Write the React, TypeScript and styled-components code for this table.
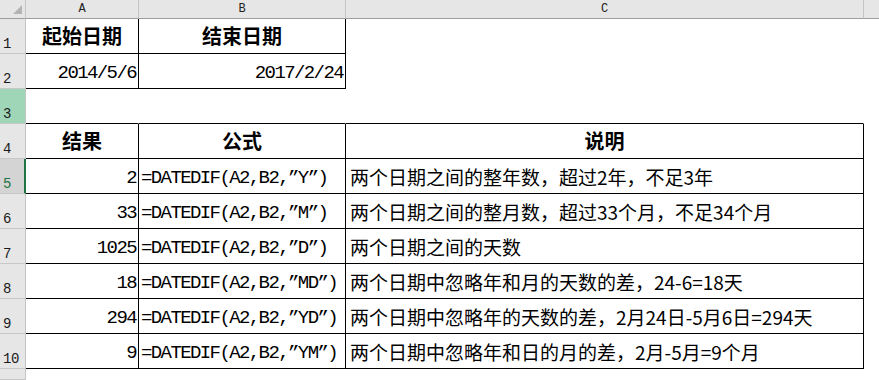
import React from 'react';
import styled, { createGlobalStyle, css } from 'styled-components';

const GlobalStyle = createGlobalStyle`
  html, body {
    margin: 0;
    padding: 0;
    background: #ffffff;
  }
`;

const Sheet = styled.div`
  display: grid;
  grid-template-columns: 26px 113px 207px 518px 1fr;
  grid-template-rows: 19px repeat(10, 35px) 1fr;
  width: 879px;
  height: 380px;
  overflow: hidden;
  background: #ffffff;
  color: #000000;
`;

const Corner = styled.div`
  display: flex;
  align-items: flex-end;
  justify-content: flex-end;
  padding: 0 3px 4px 0;
  background: #e6e6e6;
  border-right: 1px solid #c4c4c4;
  border-bottom: 1px solid #9e9e9e;
`;

const ColHead = styled.div<{ $last?: boolean }>`
  display: flex;
  align-items: center;
  justify-content: center;
  background: #e6e6e6;
  border-right: ${({ $last }) => ($last ? 'none' : '1px solid #c4c4c4')};
  border-bottom: 1px solid #9e9e9e;
  font-family: 'Liberation Mono', 'DejaVu Sans Mono', monospace;
  font-size: 12px;
  line-height: 18px;
  color: #222222;
`;

type RowState = 'normal' | 'picked' | 'active';

const RowHead = styled.div<{ $state: RowState }>`
  display: flex;
  align-items: flex-end;
  padding: 0 0 1px 3px;
  background: #e6e6e6;
  border-right: 1px solid #c4c4c4;
  border-bottom: 1px solid #c8c8c8;
  font-family: 'Liberation Mono', 'DejaVu Sans Mono', monospace;
  font-size: 14px;
  letter-spacing: -0.5px;
  line-height: 15px;
  color: #1a1a1a;

  ${({ $state }) =>
    $state === 'picked' &&
    css`
      background: #a0d6b8;
    `}

  ${({ $state }) =>
    $state === 'active' &&
    css`
      background: #d4d4d4;
      border-right: 2px solid #217346;
      color: #217346;
    `}
`;

type Kind = 'head' | 'mono' | 'text';

const Cell = styled.div<{ $kind: Kind; $align: string; $r?: boolean; $b?: boolean }>`
  display: flex;
  align-items: flex-end;
  justify-content: ${({ $align }) => $align};
  min-width: 0;
  overflow: hidden;
  white-space: nowrap;
  border-right: 1px solid ${({ $r }) => ($r ? '#000000' : 'transparent')};
  border-bottom: 1px solid ${({ $b }) => ($b ? '#000000' : 'transparent')};

  ${({ $kind }) =>
    $kind === 'head' &&
    css`
      font-family: 'Noto Sans CJK SC', 'Liberation Sans', sans-serif;
      font-weight: 700;
      font-size: 20px;
      line-height: 22px;
      padding: 0 4px 6px;
    `}

  ${({ $kind }) =>
    $kind === 'mono' &&
    css`
      font-family: 'Liberation Mono', 'DejaVu Sans Mono', 'Noto Sans CJK SC', monospace;
      font-size: 19px;
      letter-spacing: -1.6px;
      line-height: 22px;
      padding: 0 2px 4px 2px;
    `}

  ${({ $kind }) =>
    $kind === 'text' &&
    css`
      font-family: 'Noto Sans CJK SC', 'Liberation Serif', sans-serif;
      font-size: 19px;
      line-height: 22px;
      padding: 0 4px 5px 4px;
    `}
`;

type CellData = {
  t?: string;
  kind?: Kind;
  align?: string;
  r?: boolean;
  b?: boolean;
};

type RowData = { n: string; state: RowState; cells: CellData[] };

const boxed = (t: string, kind: Kind, align: string): CellData => ({ t, kind, align, r: true, b: true });

const formula = (unit: string) => `=DATEDIF(A2,B2,\u201D${unit}\u201D)`;

const rows: RowData[] = [
  {
    n: '1',
    state: 'normal',
    cells: [boxed('起始日期', 'head', 'center'), boxed('结束日期', 'head', 'center'), {}, {}],
  },
  {
    n: '2',
    state: 'normal',
    cells: [boxed('2014/5/6', 'mono', 'flex-end'), boxed('2017/2/24', 'mono', 'flex-end'), {}, {}],
  },
  {
    n: '3',
    state: 'picked',
    cells: [{ b: true }, { b: true }, { b: true }, {}],
  },
  {
    n: '4',
    state: 'normal',
    cells: [boxed('结果', 'head', 'center'), boxed('公式', 'head', 'center'), boxed('说明', 'head', 'center'), {}],
  },
  {
    n: '5',
    state: 'active',
    cells: [
      boxed('2', 'mono', 'flex-end'),
      boxed(formula('Y'), 'mono', 'flex-start'),
      boxed('两个日期之间的整年数，超过2年，不足3年', 'text', 'flex-start'),
      {},
    ],
  },
  {
    n: '6',
    state: 'normal',
    cells: [
      boxed('33', 'mono', 'flex-end'),
      boxed(formula('M'), 'mono', 'flex-start'),
      boxed('两个日期之间的整月数，超过33个月，不足34个月', 'text', 'flex-start'),
      {},
    ],
  },
  {
    n: '7',
    state: 'normal',
    cells: [
      boxed('1025', 'mono', 'flex-end'),
      boxed(formula('D'), 'mono', 'flex-start'),
      boxed('两个日期之间的天数', 'text', 'flex-start'),
      {},
    ],
  },
  {
    n: '8',
    state: 'normal',
    cells: [
      boxed('18', 'mono', 'flex-end'),
      boxed(formula('MD'), 'mono', 'flex-start'),
      boxed('两个日期中忽略年和月的天数的差，24-6=18天', 'text', 'flex-start'),
      {},
    ],
  },
  {
    n: '9',
    state: 'normal',
    cells: [
      boxed('294', 'mono', 'flex-end'),
      boxed(formula('YD'), 'mono', 'flex-start'),
      boxed('两个日期中忽略年的天数的差，2月24日-5月6日=294天', 'text', 'flex-start'),
      {},
    ],
  },
  {
    n: '10',
    state: 'normal',
    cells: [
      boxed('9', 'mono', 'flex-end'),
      boxed(formula('YM'), 'mono', 'flex-start'),
      boxed('两个日期中忽略年和日的月的差，2月-5月=9个月', 'text', 'flex-start'),
      {},
    ],
  },
];

const columns = ['A', 'B', 'C', ''];

const App: React.FC = () => {
  return (
    <>
      <GlobalStyle />
      <Sheet>
        <Corner>
          <svg width="9" height="9" viewBox="0 0 9 9">
            <polygon points="9,0 9,9 0,9" fill="#b4b4b4" />
          </svg>
        </Corner>
        {columns.map((c, i) => (
          <ColHead key={i} $last={i === columns.length - 1}>
            {c}
          </ColHead>
        ))}

        {rows.map((row) => (
          <React.Fragment key={row.n}>
            <RowHead $state={row.state}>{row.n}</RowHead>
            {row.cells.map((cell, i) => (
              <Cell
                key={i}
                $kind={cell.kind || 'text'}
                $align={cell.align || 'flex-start'}
                $r={cell.r}
                $b={cell.b}
              >
                {cell.t}
              </Cell>
            ))}
          </React.Fragment>
        ))}

        <RowHead $state="normal" />
      </Sheet>
    </>
  );
};

export default App;
